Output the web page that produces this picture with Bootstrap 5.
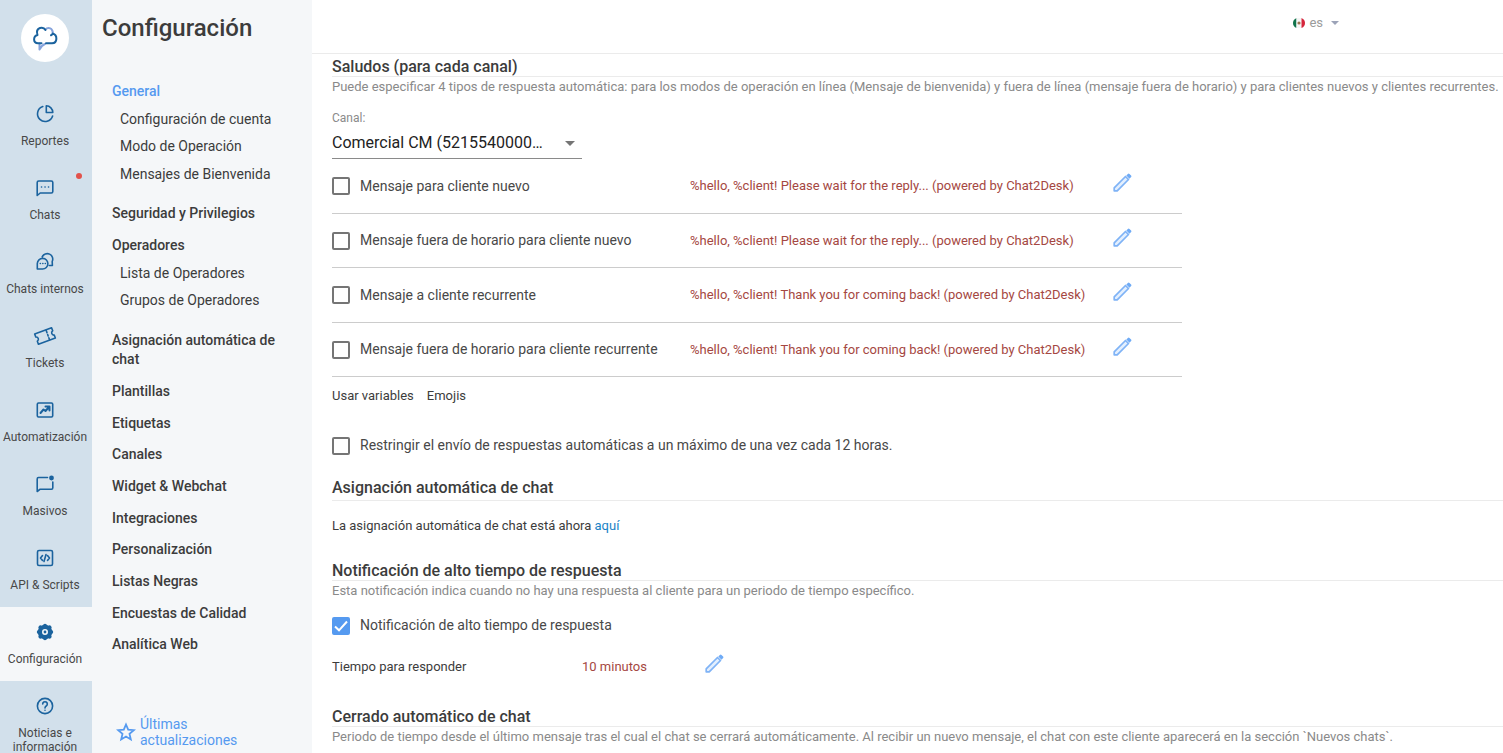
<!DOCTYPE html>
<html lang="es">
<head>
<meta charset="utf-8">
<meta name="viewport" content="width=device-width, initial-scale=1">
<title>Configuración</title>
<link href="https://cdn.jsdelivr.net/npm/bootstrap@5.3.0/dist/css/bootstrap.min.css" rel="stylesheet">
<style>
:root { --ink: #3c3c3c; --blue: #559af0; --deep: #1b639e; --muted: #8a8a8a; --value: #a54742; }
body { font-family: Roboto, "Liberation Sans", sans-serif; font-size: 14px; line-height: 19px; color: var(--ink); }
a { color: inherit; text-decoration: none; }
.app-shell { height: 100vh; }
/* icon rail */
.rail { width: 92px; background: #d2e0eb; color: #484848; font-size: 12px; line-height: 14px; }
.rail-logo { width: 48px; height: 48px; margin: 14px 23px 27px 21px; }
.rail-link { padding: 15px 2px 15px 0; gap: 10px; text-align: center; }
.rail-link svg { width: 20px; height: 20px; fill: none; stroke: var(--deep); stroke-width: 1.6; stroke-linecap: round; stroke-linejoin: round; overflow: visible; }
.rail-link.active { background: #f5f7f9; }
.unread-dot { top: 10px; right: 10px; width: 6px; height: 6px; background: #e2524b; }
/* settings menu */
.side-menu { width: 220px; background: #f5f7f9; padding: 12px 20px 5px; }
.side-title { font-size: 24px; line-height: 32px; font-weight: 500; margin: 0 0 38px -10px; }
.menu-head { font-weight: 500; display: block; }
.menu-head.active { color: var(--blue); }
.menu-sub { display: block; margin: 9px 0 0 8px; }
.menu-sub:nth-child(3) { margin-top: 8px; }
.menu-list > * { margin-bottom: 13px; }
.menu-list > :first-child, .menu-list > :nth-child(3n+6) { margin-bottom: 12px; }
.news-link { color: var(--blue); line-height: 16px; gap: 4px; padding-left: 4px; padding-right: 50px; }
/* content */
.top-bar { height: 54px; border-bottom: 1px solid #ebebeb; padding-right: 164px; padding-bottom: 7px; }
.lang-btn { font-size: 13px; line-height: 16px; color: #9b9b9b; gap: 4px; }
.content-area { padding-left: 20px; }
.block-title { font-size: 16px; line-height: 19px; height: 23px; padding-top: 3px; font-weight: 500; border-bottom: 1px solid #ebebeb; margin: 0; }
.block-title.roomy { height: 26px; }
.block-gap { padding-top: 24px; }
.block-gap-sm { padding-top: 20px; }
.block-note { font-size: 13px; line-height: 20px; color: var(--muted); margin: 0; white-space: nowrap; }
.field-label { font-size: 12px; line-height: 16px; color: var(--muted); display: block; margin-top: 13px; }
.channel-select { width: 100%; height: 33px; border: 0; border-bottom: 1px solid #8a8a8a; border-radius: 0; background: none; appearance: none; padding: 0; font-size: 16px; color: #222; outline: 0; }
.channel-box { width: 250px; }
.channel-box svg { right: 7px; top: 15px; pointer-events: none; }
.reply-row { max-width: 850px; height: 54px; border-bottom: 1px solid #ccc; }
.reply-row:nth-child(odd) { height: 55px; }
.check-line { gap: 10px; color: #484848; }
.form-check-input.tick { width: 18px; height: 18px; margin: 0; border: 2px solid #757575; border-radius: 2px; box-shadow: none; flex: none; }
.form-check-input.tick:checked { background-color: var(--blue); border-color: var(--blue); background-origin: border-box; background-image: url("data:image/svg+xml,%3csvg xmlns='http://www.w3.org/2000/svg' viewBox='0 0 18 18'%3e%3cpath fill='none' stroke='%23fff' stroke-width='2' d='m3 9.500 4 3.800L15 4.500'/%3e%3c/svg%3e"); }
.reply-name { width: 358px; }
.reply-text { width: 423px; font-size: 13px; padding-bottom: 1px; color: var(--value); white-space: nowrap; }
.edit-btn { width: 19px; height: 19px; margin-bottom: 7px; }
.small-row { font-size: 13px; line-height: 16px; }
.var-links { gap: 13px; padding: 11px 0 32px; }
.moved-note { padding-top: 17px; margin: 0; }
.moved-note a { color: #1a83c6; }
.notify-line { padding-top: 15px; }
.time-row { padding-top: 19px; }
.time-name { width: 250px; }
.time-value { width: 123px; color: var(--value); }
</style>
</head>
<body>
<svg class="d-none" xmlns="http://www.w3.org/2000/svg">
  <symbol id="pencil" viewBox="0 0 19 19">
    <path d="M1.200 17.800v-3L12.500 3.500l3 3L4.200 17.800z" fill="#e3effe" stroke="#7fb3f6" stroke-width="1.700" stroke-linejoin="round"/>
    <path d="M13.300 2.500 14.900.9q.8-.8 1.600 0l1.600 1.600q.8.8 0 1.600l-1.600 1.600z" fill="#6fabf6"/>
  </symbol>
</svg>
<div class="app-shell d-flex overflow-hidden">
  <nav class="rail flex-shrink-0 overflow-hidden" aria-label="Principal">
    <a href="#" class="rail-logo rounded-circle bg-white d-flex align-items-center justify-content-center" aria-label="Inicio">
      <svg width="26" height="26" viewBox="0 0 26 26" fill="none" stroke-width="2" stroke-linecap="round" stroke-linejoin="round">
        <path d="M13.500 4.500c1.500-2 4.500-2 6-.3 1.300 1.300 1.300 2.500 1.200 4.300M7.500 18.500v6c1.500-2.800 2.500-4.500 5.500-5.500" stroke="#86a3dc"/>
        <path d="M20.700 8.500c5 1.500 5 9.500-.7 9.800h-6M9.500 18.300H6C1 18 .8 11.500 5.500 10 4.300 6.500 5.500 4 8 3c2-.5 4.500.2 5.500 2M20.700 8.500c-.3 1-.9 1.500-1.700 1.800" stroke="#1b639e"/>
      </svg>
    </a>
    <a href="#" class="rail-link d-flex flex-column align-items-center">
      <svg viewBox="0 0 20 20"><path d="M7.800 2.500a7.700 7.700 0 1 0 9.800 9.500M11.300 1.800v6.700h6.500a6.700 6.700 0 0 0-6.500-6.700z"/></svg>Reportes</a>
    <a href="#" class="rail-link d-flex flex-column align-items-center position-relative">
      <svg viewBox="0 0 20 20"><path d="M2.200 17.500v-13Q2.200 3 3.700 3h12.600q1.500 0 1.500 1.500v9q0 1.500-1.500 1.500H5.200z"/><path d="M6.500 9h.1M10 9h.1M13.500 9h.1"/></svg>Chats
      <span class="unread-dot position-absolute rounded-circle"></span></a>
    <a href="#" class="rail-link d-flex flex-column align-items-center">
      <svg viewBox="0 0 20 20"><path d="M2.300 17v-5.500a5.300 5.300 0 1 1 5.300 5.500zM7.200 4.800a5.300 5.300 0 1 1 10 4.700l.2 4h-3"/><path d="M5.300 11.500h.1M7.800 11.500h.1M10.300 11.500h.1"/></svg>Chats internos</a>
    <a href="#" class="rail-link d-flex flex-column align-items-center">
      <svg viewBox="0 0 20 20"><g transform="rotate(-20 10 10)"><path d="M1 4.500h18v3.300a2.300 2.300 0 0 0 0 4.500v3.200H1v-3.200a2.300 2.300 0 0 0 0-4.500z"/><path d="M13 5v2.500M13 9.500v1.500M13 13v2"/></g></svg>Tickets</a>
    <a href="#" class="rail-link d-flex flex-column align-items-center">
      <svg viewBox="0 0 20 20"><rect x="2.300" y="3" width="15.400" height="14" rx="1.200"/><path d="m5.500 13 3-3.500 2 1.500 3.500-4M10.500 6.500h4v4" stroke-width="2"/></svg>Automatización</a>
    <a href="#" class="rail-link d-flex flex-column align-items-center">
      <svg viewBox="0 0 20 20"><path d="M12.500 3.500h-9Q2.200 3.500 2.200 5v12.500l3-2.300h11.300q1.300 0 1.300-1.500V8"/><circle cx="16.500" cy="4" r="1.600" fill="#1b639e"/></svg>Masivos</a>
    <a href="#" class="rail-link d-flex flex-column align-items-center">
      <svg viewBox="0 0 20 20"><rect x="2.500" y="2.500" width="15" height="15" rx="1.500"/><path d="M7.500 7.500 5.500 10l2 2.500M12.500 7.500l2 2.500-2 2.500M11 6.500l-2 7"/></svg>API &amp; Scripts</a>
    <a href="#" class="rail-link active d-flex flex-column align-items-center" aria-current="page">
      <svg viewBox="0 0 20 20"><circle cx="10" cy="10" r="5" stroke-width="4.500"/><path d="M10 3.800v12.400M3.800 10h12.400M5.400 5.400l9.200 9.200M14.600 5.400l-9.200 9.200" stroke-width="4"/><circle cx="10" cy="10" r="2.200" fill="#1b639e" stroke="#f5f7f9" stroke-width="1.600"/></svg>Configuración</a>
    <a href="#" class="rail-link d-flex flex-column align-items-center">
      <svg viewBox="0 0 20 20"><circle cx="10" cy="10" r="7.600"/><path d="M7.700 8a2.300 2.300 0 1 1 3.500 2q-1.200.8-1.200 2M10 14.200v.1"/></svg>Noticias e información</a>
  </nav>

  <aside class="side-menu flex-shrink-0 d-flex flex-column">
    <h1 class="side-title">Configuración</h1>
    <div class="menu-list">
      <div class="pb-2">
        <a href="#" class="menu-head active">General</a>
        <a href="#" class="menu-sub">Configuración de cuenta</a>
        <a href="#" class="menu-sub">Modo de Operación</a>
        <a href="#" class="menu-sub">Mensajes de Bienvenida</a>
      </div>
      <a href="#" class="menu-head">Seguridad y Privilegios</a>
      <div class="pb-2">
        <a href="#" class="menu-head">Operadores</a>
        <a href="#" class="menu-sub">Lista de Operadores</a>
        <a href="#" class="menu-sub">Grupos de Operadores</a>
      </div>
      <a href="#" class="menu-head">Asignación automática de chat</a>
      <a href="#" class="menu-head">Plantillas</a>
      <a href="#" class="menu-head">Etiquetas</a>
      <a href="#" class="menu-head">Canales</a>
      <a href="#" class="menu-head">Widget &amp; Webchat</a>
      <a href="#" class="menu-head">Integraciones</a>
      <a href="#" class="menu-head">Personalización</a>
      <a href="#" class="menu-head">Listas Negras</a>
      <a href="#" class="menu-head">Encuestas de Calidad</a>
      <a href="#" class="menu-head">Analítica Web</a>
    </div>
    <a href="#" class="news-link d-flex align-items-center mt-auto">
      <svg class="flex-shrink-0" width="20" height="20" viewBox="0 0 20 20" fill="none" stroke="#559af0" stroke-width="1.800"><path d="m10 2.500 2.200 5.200 5.600.5-4.300 3.700 1.300 5.500-4.800-2.900-4.800 2.900 1.300-5.500L2.200 8.200l5.600-.5z"/></svg>
      <span>Últimas actualizaciones</span>
    </a>
  </aside>

  <div class="flex-grow-1 overflow-hidden bg-white">
    <header class="top-bar d-flex justify-content-end align-items-center">
      <button type="button" class="lang-btn btn border-0 p-0 d-flex align-items-center">
        <svg width="12" height="12" viewBox="0 0 12 12"><path d="M3.500 1v10Q0 9.500 0 6t3.500-5z" fill="#11734b"/><path d="M3.500 1h5v10h-5z" fill="#f6f6f6"/><path d="M8.500 1Q12 2.500 12 6t-3.500 5z" fill="#d5263c"/><circle cx="6" cy="6" r="1.600" fill="#9a7350"/></svg>
        es
        <svg class="ms-1" width="8" height="4" viewBox="0 0 8 4"><path d="M0 0h8L4 4z" fill="#9ca3b8"/></svg>
      </button>
    </header>

    <main class="content-area">
      <section>
        <h2 class="block-title">Saludos (para cada canal)</h2>
        <p class="block-note">Puede especificar 4 tipos de respuesta automática: para los modos de operación en línea (Mensaje de bienvenida) y fuera de línea (mensaje fuera de horario) y para clientes nuevos y clientes recurrentes.</p>
        <label for="channel" class="field-label">Canal:</label>
        <div class="channel-box position-relative">
          <select id="channel" class="channel-select d-block"><option>Comercial CM (5215540000…</option></select>
          <svg class="position-absolute" width="10" height="5" viewBox="0 0 10 5"><path d="M0 0h10L5 5z" fill="#757575"/></svg>
        </div>
        <div>
          <div class="reply-row d-flex align-items-center">
            <div class="reply-name check-line d-flex align-items-center"><input class="form-check-input tick" type="checkbox" id="r1"><label for="r1">Mensaje para cliente nuevo</label></div>
            <div class="reply-text">%hello, %client! Please wait for the reply... (powered by Chat2Desk)</div>
            <button type="button" class="edit-btn btn border-0 p-0 d-flex" aria-label="Editar"><svg width="19" height="19"><use href="#pencil"/></svg></button>
          </div>
          <div class="reply-row d-flex align-items-center">
            <div class="reply-name check-line d-flex align-items-center"><input class="form-check-input tick" type="checkbox" id="r2"><label for="r2">Mensaje fuera de horario para cliente nuevo</label></div>
            <div class="reply-text">%hello, %client! Please wait for the reply... (powered by Chat2Desk)</div>
            <button type="button" class="edit-btn btn border-0 p-0 d-flex" aria-label="Editar"><svg width="19" height="19"><use href="#pencil"/></svg></button>
          </div>
          <div class="reply-row d-flex align-items-center">
            <div class="reply-name check-line d-flex align-items-center"><input class="form-check-input tick" type="checkbox" id="r3"><label for="r3">Mensaje a cliente recurrente</label></div>
            <div class="reply-text">%hello, %client! Thank you for coming back! (powered by Chat2Desk)</div>
            <button type="button" class="edit-btn btn border-0 p-0 d-flex" aria-label="Editar"><svg width="19" height="19"><use href="#pencil"/></svg></button>
          </div>
          <div class="reply-row d-flex align-items-center">
            <div class="reply-name check-line d-flex align-items-center"><input class="form-check-input tick" type="checkbox" id="r4"><label for="r4">Mensaje fuera de horario para cliente recurrente</label></div>
            <div class="reply-text">%hello, %client! Thank you for coming back! (powered by Chat2Desk)</div>
            <button type="button" class="edit-btn btn border-0 p-0 d-flex" aria-label="Editar"><svg width="19" height="19"><use href="#pencil"/></svg></button>
          </div>
        </div>
        <div class="small-row var-links d-flex"><a href="#">Usar variables</a><a href="#">Emojis</a></div>
        <div class="check-line d-flex align-items-center"><input class="form-check-input tick" type="checkbox" id="limit"><label for="limit">Restringir el envío de respuestas automáticas a un máximo de una vez cada 12 horas.</label></div>
      </section>

      <section class="block-gap-sm">
        <h2 class="block-title roomy">Asignación automática de chat</h2>
        <p class="small-row moved-note">La asignación automática de chat está ahora <a href="#">aquí</a></p>
      </section>

      <section class="block-gap">
        <h2 class="block-title">Notificación de alto tiempo de respuesta</h2>
        <p class="block-note">Esta notificación indica cuando no hay una respuesta al cliente para un periodo de tiempo específico.</p>
        <div class="check-line notify-line d-flex align-items-center"><input class="form-check-input tick" type="checkbox" id="notify" checked><label for="notify">Notificación de alto tiempo de respuesta</label></div>
        <div class="small-row time-row d-flex align-items-center">
          <div class="time-name">Tiempo para responder</div>
          <div class="time-value">10 minutos</div>
          <button type="button" class="edit-btn btn border-0 p-0 d-flex" aria-label="Editar"><svg width="19" height="19"><use href="#pencil"/></svg></button>
        </div>
      </section>

      <section class="block-gap">
        <h2 class="block-title">Cerrado automático de chat</h2>
        <p class="block-note">Periodo de tiempo desde el último mensaje tras el cual el chat se cerrará automáticamente. Al recibir un nuevo mensaje, el chat con este cliente aparecerá en la sección `Nuevos chats`.</p>
      </section>
    </main>
  </div>
</div>
<script src="https://cdn.jsdelivr.net/npm/bootstrap@5.3.0/dist/js/bootstrap.bundle.min.js"></script>
</body>
</html>
